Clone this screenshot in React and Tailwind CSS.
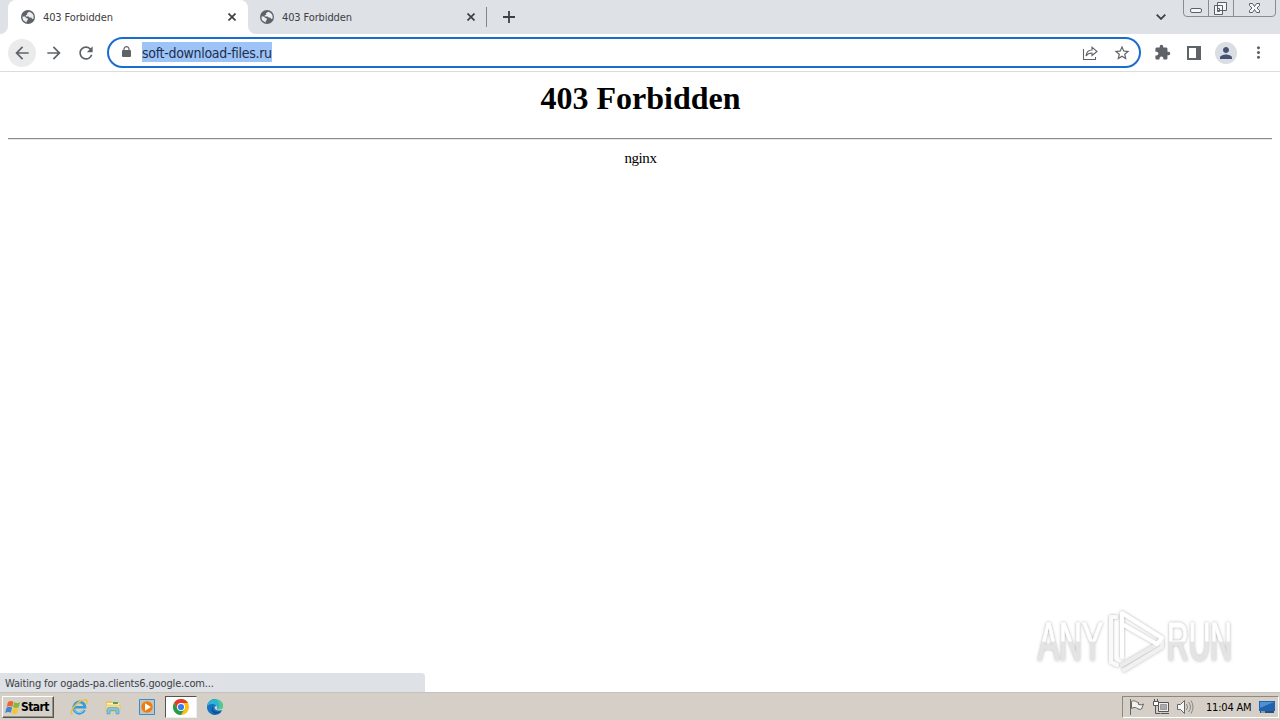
import React from 'react'
import { MdArrowBack, MdArrowForward, MdRefresh, MdStarBorder, MdExtension, MdMoreVert, MdPerson } from 'react-icons/md'

function Globe() {
  return (
    <svg viewBox="0 0 14 14" className="w-3.5 h-3.5 shrink-0">
      <circle cx="7" cy="7" r="7" fill="#5f6368" />
      <path d="M8.2 1.7 6 3.2l.3 1.4-1.6 1v1h3l1.2 1.2 1.5-.2.6 1.1 1.3.2a5.5 5.5 0 0 0-4.1-7.2Z" fill="#eceef0" />
      <path d="M1.5 6.6h2.3l1.7 1.7h1.3v1.8l-1.2.8.4 1.5A5.5 5.5 0 0 1 1.5 6.6Z" fill="#eceef0" />
    </svg>
  )
}

function Close() {
  return (
    <svg viewBox="0 0 8 8" className="w-2 h-2 shrink-0" fill="none" stroke="#3c4043" strokeWidth="1.7">
      <path d="m.5.5 7 7m0-7-7 7" />
    </svg>
  )
}

function Tab({ active }) {
  return (
    <div className={`relative flex items-center h-[34px] ${active ? 'w-60 pl-[13px] bg-white rounded-t-lg' : 'w-[238px] pl-3'}`}>
      <Globe />
      <span className="ml-2 pt-0.5 w-[185px] text-[11px] tracking-[-0.12px] text-[#3c4043] whitespace-nowrap">403 Forbidden</span>
      <Close />
      {active && (
        <svg viewBox="0 0 256 8" className="absolute -left-2 bottom-0 w-64 h-2 max-w-none" fill="#fff">
          <path d="M0 8a8 8 0 0 0 8-8v8ZM248 0a8 8 0 0 0 8 8h-8Z" />
        </svg>
      )}
    </div>
  )
}

function WindowButtons() {
  return (
    <svg viewBox="0 0 94 18" className="w-[94px] h-[18px] mr-[3px]" fill="none" stroke="#888c94">
      <path d="M.5 0v13q0 3.5 3.5 3.5h85q3.5 0 3.5-3.5V0M25.5 0v16M50.5 0v16" />
      <g stroke="#5c6068" fill="#f5f6f7">
        <rect x="7.5" y="8.5" width="11" height="4" rx="1.5" />
        <path d="M34.5 2.5h9v8h-9zM31.5 5.5h8v9h-8zM34.5 8.5h2v3h-2z" />
        <path d="M66.5 3.5h3l2 3 2-3h3v2l-2.5 2.5 2.5 2.5v2h-3l-2-3-2 3h-3v-2L69 8l-2.5-2.5Z" />
      </g>
    </svg>
  )
}

function TabStrip() {
  return (
    <div className="flex h-[34px] bg-[#dee1e6] pl-2">
      <Tab active />
      <Tab />
      <div className="w-px h-5 mt-[7px] bg-[#80868b]" />
      <svg viewBox="0 0 12 12" className="w-3 h-3 mt-[11px] ml-4" stroke="#3c4043" strokeWidth="1.8">
        <path d="M6 0v12M0 6h12" />
      </svg>
      <div className="ml-auto flex">
        <svg viewBox="0 0 10 6" className="w-2.5 h-1.5 mt-3.5 mr-[17px]" fill="none" stroke="#3c4043" strokeWidth="1.8">
          <path d="m.7.7 4.3 4.2L9.3.7" />
        </svg>
        <WindowButtons />
      </div>
    </div>
  )
}

function Toolbar() {
  return (
    <div className="flex items-center h-[38px] bg-white border-b border-[#dadce0] px-2 text-[#5f6368]">
      <div className="w-7 h-7 rounded-full bg-[#ebebec] flex items-center justify-center">
        <MdArrowBack size={20} />
      </div>
      <MdArrowForward size={20} className="ml-2" />
      <MdRefresh size={20} className="ml-3" />
      <div className="ml-[11px] w-[1034px] h-[31px] rounded-full border-2 border-[#1a6dd0] bg-white flex items-center pl-[13px] pr-2">
        <svg viewBox="0 0 9 12" className="w-[9px] h-3 mb-0.5" fill="#5f6368">
          <path d="M1 4h7q1 0 1 1v5q0 1-1 1H1q-1 0-1-1V5q0-1 1-1Z" />
          <path d="M2 5V3.1a2.5 2.5 0 0 1 5 0V5" fill="none" stroke="#5f6368" strokeWidth="1.2" />
        </svg>
        <span className="ml-[11px] w-[130px] h-5 leading-[22px] -mt-px bg-[#9dc3f7] text-[14px] tracking-[-0.3px] text-[#1c2f4c] whitespace-nowrap">soft-download-files.ru</span>
        <svg viewBox="0 0 16 16" className="w-4 h-4 ml-auto mr-[15px]" fill="none" stroke="#5f6368" strokeWidth="1.1">
          <path d="M1.5 4v10.5h12V12M4 11c.5-4 2.5-6 6-6V2.2L15 6.5l-5 4V8C7 8 5.3 9 4 11Z" />
        </svg>
        <MdStarBorder size={18} />
      </div>
      <MdExtension size={17} className="ml-[13px]" />
      <svg viewBox="0 0 14 14" className="w-3.5 h-3.5 ml-4" fill="#5f6368">
        <path fillRule="evenodd" d="M0 0h14v14H0ZM2 2v10h7V2Z" />
      </svg>
      <div className="ml-3.5 w-[22px] h-[22px] rounded-full bg-[#dadde3] flex items-center justify-center">
        <MdPerson size={18} className="text-[#455270]" />
      </div>
      <MdMoreVert size={19} className="ml-3" />
    </div>
  )
}

function Watermark() {
  return (
    <svg viewBox="0 0 210 76" className="absolute left-[1030px] top-[533px] w-[210px] h-[76px] overflow-visible">
      <defs>
        <filter id="glow" x="-10%" y="-10%" width="120%" height="130%">
          <feDropShadow dx="0" dy="0" stdDeviation="1.5" floodColor="#666" floodOpacity="0.55" />
        </filter>
        <linearGradient id="fade" gradientUnits="userSpaceOnUse" x1="0" y1="-38" x2="0" y2="0">
          <stop offset="0.49" stopColor="#fff" />
          <stop offset="0.52" stopColor="#e4e4e4" />
        </linearGradient>
      </defs>
      <g filter="url(#glow)">
        <g fill="url(#fade)" stroke="url(#fade)" strokeWidth="0.8" fontSize="54" fontFamily="Liberation Sans">
          <text transform="translate(8 55) scale(.585 .98)">ANY</text>
          <text transform="translate(137 55) scale(.555 .98)">RUN</text>
        </g>
        <g fill="none" strokeLinejoin="round" strokeLinecap="round">
          <path d="M92 60 130 38" stroke="#ececec" strokeWidth="4" />
          <path d="M86 12h-5v45l6 3" stroke="#fafafa" strokeWidth="4" />
          <path d="M94 65 132 42V37" stroke="#f1f1f1" strokeWidth="4" />
          <path d="M92 52V8l40 25L127 39 94 20" stroke="#fff" strokeWidth="4" />
        </g>
      </g>
    </svg>
  )
}

function StartFlag() {
  return (
    <svg viewBox="0 0 16 15" className="w-4 h-[15px]">
      <path d="M3 2q3-2 5.5 0L7.3 7Q4.5 5.2 1.7 7Z" fill="#ee6530" />
      <path d="M9.2 2.3q3 1.6 6 0l-1.5 5q-3 1.6-5.6 0Z" fill="#83b93c" />
      <path d="M1.5 7.7q3-1.7 5.6 0l-1.3 5Q3 11.2.1 13Z" fill="#4386cf" />
      <path d="M8 8q3 1.6 5.6 0l-1.3 5q-3 1.8-5.7 0Z" fill="#f6c532" />
    </svg>
  )
}

function Explorer() {
  return (
    <svg viewBox="0 0 18 18" className="w-[18px] h-[18px]" fill="none">
      <path d="M14.5 12A5.7 5.7 0 1 1 15 9.2H5" stroke="#379bd5" strokeWidth="2.6" />
      <path d="M14 12A5.5 5.5 0 0 1 4 11" stroke="#83d0f0" />
      <path d="M2.5 16.2C-2 15 7 2.5 15 1.8c2.5-.2 2.5 2 1.2 4" stroke="#e8bf45" strokeWidth="1.5" />
    </svg>
  )
}

function Folder() {
  return (
    <svg viewBox="0 0 16 16" className="w-4 h-4">
      <path d="M1 2h5l1 1h7v10H1Z" fill="#edc45d" />
      <path d="M2 4h12v3H2Z" fill="#fff6c7" />
      <path d="M8 3h5v2H8Z" fill="#59a34b" />
      <path d="M1 6h14v6H1Z" fill="#f8de83" stroke="#e0bd60" strokeWidth=".6" />
      <path d="M2 15v-4q0-2.5 2-2.5h8q2 0 2 2.5v4h-3v-3.5H5V15Z" fill="#7dc5e4" stroke="#4c9ac2" strokeWidth=".6" />
    </svg>
  )
}

function Player() {
  return (
    <svg viewBox="0 0 16 16" className="w-4 h-4">
      <path d="M.5.5h15v15H.5Z" fill="#a6cdea" stroke="#408abd" />
      <path d="M2.5 2.5h11v11h-11Z" fill="#f5b469" />
      <circle cx="8" cy="8" r="5.7" fill="#ed7b12" />
      <path d="m6 4.2 6 3.8-6 3.8Z" fill="#fff" />
    </svg>
  )
}

function Chrome() {
  return (
    <svg viewBox="0 0 16 16" className="w-4 h-4">
      <circle cx="8" cy="8" r="8" fill="#fbc116" />
      <path d="M1.07 4A8 8 0 0 1 14.93 4H8L4.54 10Z" fill="#e33b2e" />
      <path d="M1.07 4 4.54 10 8 12l3.46-2L8 16A8 8 0 0 1 1.07 4Z" fill="#239c50" />
      <circle cx="8" cy="8" r="4" fill="#fff" />
      <circle cx="8" cy="8" r="3.1" fill="#3b7de6" />
    </svg>
  )
}

function Edge() {
  return (
    <svg viewBox="0 0 16 16" className="w-4 h-4">
      <path d="M8 0a8 8 0 1 0 5.8 13.5L15 11 9 10V6L14 5Z" fill="#1672be" />
      <path d="M0 7.5C.8-2 15-2.2 16 6.5c.3 3.2-2.4 4.6-5.2 4.1-1.8-.4-1.2-1.3-1-2.3C10 5 3.5 3 0 7.5Z" fill="#2cb4d1" />
      <path d="M10 .3c3.4.8 5.8 3.4 6 6.2.3 3-2.5 4.7-5.2 4C13 8 13 4 10 .3Z" fill="#56c98b" />
      <path d="M6 7.5c-1.3 3.8 2.6 6.4 8 4.8-1.8 3-6.7 3.4-8.7.6C4 11 4.5 8.6 6 7.5Z" fill="#0f509c" />
      <path d="M7.8 7.6c1.5-.9 2.6.1 2.1 1.3-.2.8-.3 1.3 1 1.6 1.8.4 3.5 0 4.6-.9-.5 1.8-2.5 2.2-4.2 1.9-2.6-.3-4.3-1.8-3.5-3.9Z" fill="#d6d2ca" />
    </svg>
  )
}

function TrayIcons() {
  return (
    <svg viewBox="0 0 66 18" className="w-[66px] h-[18px]" fill="none" stroke="#666">
      <path d="M2.5 1v16" stroke="#666" />
      <path d="M3.5 3.5c3-2 5 1 7 1v2q3 1 5-.5l-2 5c-2 1-3 0-5-1s-3-.5-5 .5Z" fill="#f3f2ef" />
      <path d="M30.5 4.5h10v9h-10Z" fill="#eee" stroke="#555" />
      <path d="M32.5 6.5h6v5h-6Z" fill="#aaa" stroke="#999" />
      <path d="M33 15.5h8M27.5 8v7.5h5" stroke="#555" />
      <path d="M25.5 3.5h5v4h-5ZM26.5 1v2M29.5 1v2" fill="#fff" stroke="#555" />
      <path d="M49.5 6.5h3l4-4v13l-4-4h-3Z" fill="#f7f7f5" />
      <path d="M58.5 6q2 3 0 6M60.5 4q4 5 0 10M63 2.5q4 6.5 0 13" stroke="#888" />
    </svg>
  )
}

function Taskbar() {
  return (
    <div className="flex h-[27px] bg-[#d5cfc7] pl-0.5">
      <button className="flex items-center w-[52px] h-[22px] mt-[3px] pl-0.5 bg-[#d5d1c9] border border-t-white border-l-white border-r-[#55534e] border-b-[#55534e] shadow-[inset_-1px_-1px_0_#96928b]">
        <StartFlag />
        <span className="text-[12px] font-bold tracking-[-0.55px] text-black">Start</span>
      </button>
      <div className="flex items-center h-[22px] mt-[3px]">
        <div className="ml-4"><Explorer /></div>
        <div className="ml-[17px]"><Folder /></div>
        <div className="ml-[18px]"><Player /></div>
        <div className="ml-2.5 w-8 h-[22px] bg-white border border-t-[#55534e] border-l-[#55534e] border-r-[#eee] border-b-[#eee] flex items-center justify-center">
          <Chrome />
        </div>
        <div className="ml-2.5"><Edge /></div>
      </div>
      <div className="ml-auto flex items-center w-[157px] h-[22px] mt-[3px] mr-px pl-[5px] border border-t-[#8d8981] border-l-[#8d8981] border-r-white border-b-white">
        <TrayIcons />
        <span className="ml-3 pt-0.5 w-[47px] text-[11px] tracking-[-0.2px] text-black whitespace-nowrap">11:04 AM</span>
        <svg viewBox="0 0 16 14" className="w-4 h-3.5 ml-[6px]">
          <path d="M0 1h16v10H0Z" fill="#2263ae" />
          <path d="M1 2h14L1 8Z" fill="#4f91d4" />
          <path d="M1 11h14v2H1Z" fill="#294e79" />
          <path d="M2 12h4" stroke="#d8e7f4" />
        </svg>
      </div>
    </div>
  )
}

export default function App() {
  return (
    <div className="w-[1280px] h-[720px] overflow-hidden flex flex-col bg-white font-['DejaVu_Sans_Condensed','DejaVu_Sans',sans-serif] [font-stretch:condensed]">
      <TabStrip />
      <Toolbar />
      <main className="relative h-[620px] px-2 text-center text-black font-['Liberation_Serif',serif]">
        <h1 className="pt-2 pl-px text-[32px] leading-[37px] font-bold">403 Forbidden</h1>
        <hr className="mt-[21px] h-0.5 border-t border-b border-t-[#8c8c8c] border-b-[#e8e8e8]" />
        <p className="mt-[9px] pl-px text-[15px] leading-[18px] tracking-[-0.4px]">nginx</p>
        <Watermark />
        <div className="absolute left-0 bottom-0 w-[425px] h-[19px] pt-px pl-[5px] rounded-tr-[4px] bg-[#dee1e6] text-left text-[11px] leading-[19px] tracking-[-0.14px] text-[#3c4043] font-['DejaVu_Sans_Condensed','DejaVu_Sans',sans-serif]">
          Waiting for ogads-pa.clients6.google.com...
        </div>
      </main>
      <div className="h-px bg-[#c5c2b9]" />
      <Taskbar />
    </div>
  )
}
